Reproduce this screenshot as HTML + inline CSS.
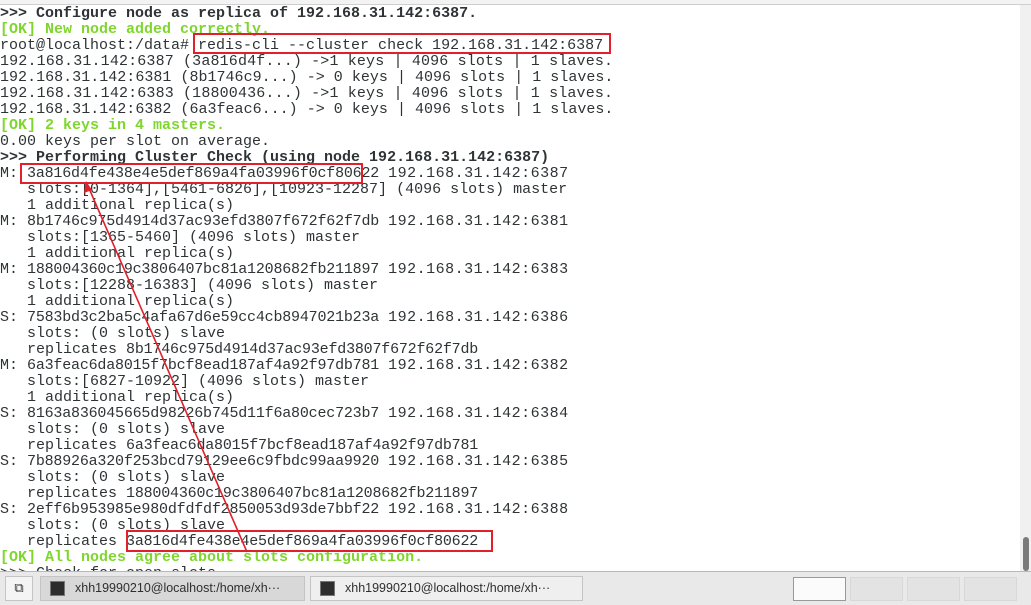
<!DOCTYPE html>
<html><head><meta charset="utf-8"><style>
html,body{margin:0;padding:0;width:1031px;height:605px;overflow:hidden;background:#fff;}
.top{position:absolute;left:0;top:0;width:1031px;height:4px;background:#f3f3f3;border-bottom:1px solid #cfcfcf;}
pre{position:absolute;left:0;top:6px;margin:0;font-family:"Liberation Mono","DejaVu Sans Mono",monospace;font-size:15px;line-height:16px;color:#2e3436;letter-spacing:0;}
b{font-weight:bold;}
i{font-style:normal;letter-spacing:-0.2px;}
s{text-decoration:none;letter-spacing:0.5px;}
.w{letter-spacing:0.15px;}
.v{letter-spacing:0.02px;}
.g{color:#7fd62e;font-weight:bold;}
.sb{position:absolute;right:0;top:5px;width:11px;height:566px;background:#f0f0f0;}
.th{position:absolute;right:2px;top:532px;width:6px;height:34px;background:#7a7a7a;border-radius:3px;}
.box{position:absolute;border:2px solid #e0202a;box-sizing:border-box;}
.tb{position:absolute;left:0;top:571px;width:1031px;height:34px;background:#e9e9e9;border-top:1px solid #b8b8b8;box-sizing:border-box;}
.btn{position:absolute;top:4px;height:25px;border:1px solid #c4c4c4;box-sizing:border-box;font-family:"Liberation Sans",sans-serif;font-size:12.5px;color:#2e2e2e;line-height:23px;}
.ico{position:absolute;left:9px;top:4px;width:15px;height:15px;background:#2d2d2d;border:1px solid #777;box-sizing:border-box;}
.ws{position:absolute;top:5px;height:24px;border:1px solid #d8d8d8;background:#e3e3e3;box-sizing:border-box;}
</style></head><body>
<div class="top"></div>
<pre><b>&gt;&gt;&gt; Configure node as replica of 192.168.31.142:6387.</b>
<span class="g">[OK] New node added correctly.</span>
root@localhost:/data# redis-cli --cluster check 192.168.31.142:6387
<span class="w">192.168.31.142:6387 (3a816d4f...) -&gt;1 keys | 4096 slots | 1 slaves.</span>
<span class="v">192.168.31.142:6381 (8b1746c9...) -&gt; 0 keys | 4096 slots | 1 slaves.</span>
<span class="w">192.168.31.142:6383 (18800436...) -&gt;1 keys | 4096 slots | 1 slaves.</span>
<span class="v">192.168.31.142:6382 (6a3feac6...) -&gt; 0 keys | 4096 slots | 1 slaves.</span>
<span class="g">[OK] 2 keys in 4 masters.</span>
0.00 keys per slot on average.
<b>&gt;&gt;&gt; Performing Cluster Check (using node 192.168.31.142:6387)</b>
M: <i>3a816d4fe438e4e5def869a4fa03996f0cf80622</i> <s>192.168.31.142:6387</s>
   slots:[0-1364],[5461-6826],[10923-12287] (4096 slots) master
   1 additional replica(s)
M: <i>8b1746c975d4914d37ac93efd3807f672f62f7db</i> <s>192.168.31.142:6381</s>
   slots:[1365-5460] (4096 slots) master
   1 additional replica(s)
M: <i>188004360c19c3806407bc81a1208682fb211897</i> <s>192.168.31.142:6383</s>
   slots:[12288-16383] (4096 slots) master
   1 additional replica(s)
S: <i>7583bd3c2ba5c4afa67d6e59cc4cb8947021b23a</i> <s>192.168.31.142:6386</s>
   slots: (0 slots) slave
   replicates <i>8b1746c975d4914d37ac93efd3807f672f62f7db</i>
M: <i>6a3feac6da8015f7bcf8ead187af4a92f97db781</i> <s>192.168.31.142:6382</s>
   slots:[6827-10922] (4096 slots) master
   1 additional replica(s)
S: <i>8163a836045665d98226b745d11f6a80cec723b7</i> <s>192.168.31.142:6384</s>
   slots: (0 slots) slave
   replicates <i>6a3feac6da8015f7bcf8ead187af4a92f97db781</i>
S: <i>7b88926a320f253bcd79129ee6c9fbdc99aa9920</i> <s>192.168.31.142:6385</s>
   slots: (0 slots) slave
   replicates <i>188004360c19c3806407bc81a1208682fb211897</i>
S: <i>2eff6b953985e980dfdfdf2850053d93de7bbf22</i> <s>192.168.31.142:6388</s>
   slots: (0 slots) slave
   replicates <i>3a816d4fe438e4e5def869a4fa03996f0cf80622</i>
<span class="g">[OK] All nodes agree about slots configuration.</span>
&gt;&gt;&gt; Check for open slots...</pre>
<div class="sb"><div class="th"></div></div>
<div class="box" style="left:193px;top:33px;width:418px;height:21px"></div>
<div class="box" style="left:20px;top:163px;width:343px;height:21px"></div>
<div class="box" style="left:126px;top:530px;width:367px;height:22px"></div>
<svg style="position:absolute;left:0;top:0" width="1031" height="605">
<line x1="88" y1="186" x2="247" y2="552" stroke="#e0202a" stroke-width="1.6"/>
<polygon points="86,181 84,193 92,190" fill="#e0202a"/>
</svg>
<div class="tb">
<div class="btn" style="left:5px;width:28px;background:#f4f4f4;text-align:center;line-height:22px;font-size:13px">⧉</div>
<div class="btn" style="left:40px;width:265px;background:#d8d8d8"><div class="ico"></div><span style="position:absolute;left:34px">xhh19990210@localhost:/home/xh···</span></div>
<div class="btn" style="left:310px;width:273px;background:#efefef"><div class="ico"></div><span style="position:absolute;left:34px">xhh19990210@localhost:/home/xh···</span></div>
<div class="ws" style="left:793px;width:53px;background:#fbfbfb;border-color:#999"></div>
<div class="ws" style="left:850px;width:53px"></div>
<div class="ws" style="left:907px;width:53px"></div>
<div class="ws" style="left:964px;width:53px"></div>
</div>
</body></html>
